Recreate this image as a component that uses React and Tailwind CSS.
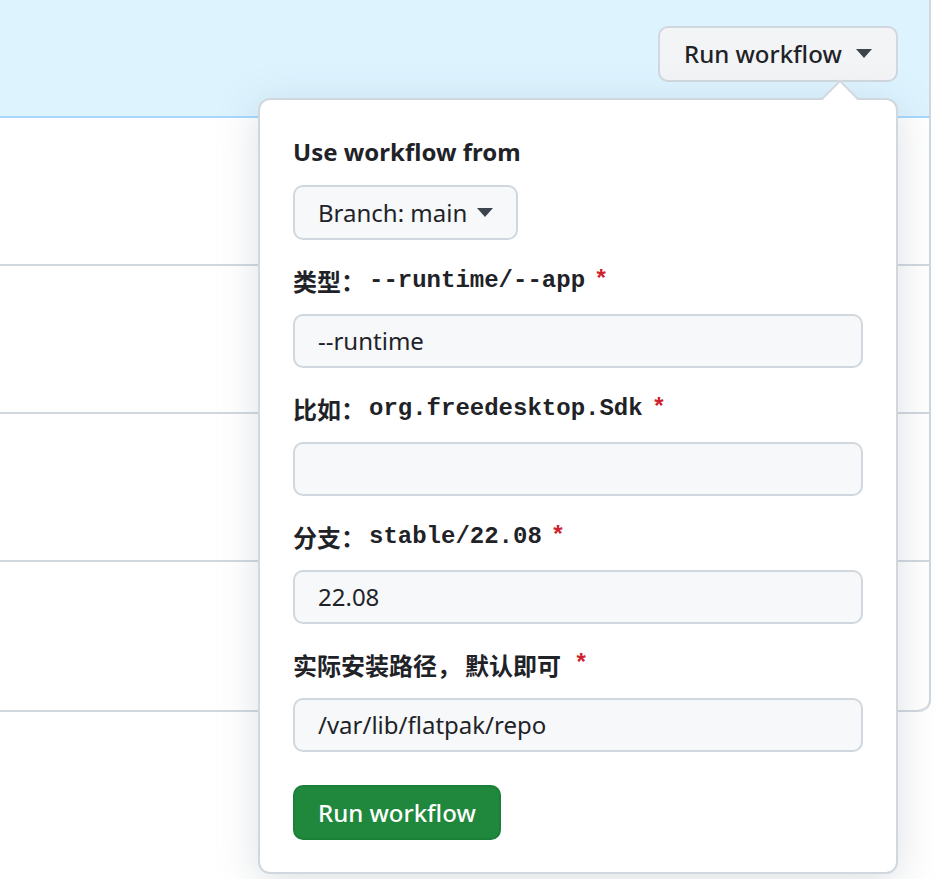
const fields = [
  { cjk: '类型：', code: '--runtime/--app', value: '--runtime' },
  { cjk: '比如：', code: 'org.freedesktop.Sdk', value: '' },
  { cjk: '分支：', code: 'stable/22.08', value: '22.08' },
  { cjk: '实际安装路径，', tail: '默认即可', code: '', value: '/var/lib/flatpak/repo' },
]

function Caret({ className }) {
  return (
    <svg viewBox="0 0 16 10" className={className} fill="currentColor">
      <path d="M0 0h16L8 9z" />
    </svg>
  )
}

function Field({ cjk, tail, code, value }) {
  return (
    <div className="mt-[24px]">
      <label className="flex h-[34px] items-center text-[24px] font-bold text-[#1f2328] font-['Liberation_Mono','Noto_Sans_CJK_SC',monospace]">
        <span className="font-['Noto_Sans_CJK_SC',sans-serif]">{cjk}</span>
        {tail && <span className="ml-[4px] font-['Noto_Sans_CJK_SC',sans-serif]">{tail}</span>}
        {code && <span className="ml-[4px]">{code}</span>}
        <span className={`text-[#cf222e] ${code ? 'ml-[9px]' : 'ml-[13px]'}`}>*</span>
      </label>
      <div className="mt-[16px] flex h-[54px] items-center rounded-[10px] border-2 border-[#d0d7de] bg-[#f6f8fa] px-[23px] text-[24px] text-[#1f2328]">
        {value}
      </div>
    </div>
  )
}

export default function App() {
  return (
    <div className="relative h-[879px] w-[935px] overflow-hidden bg-white font-['Noto_Sans',sans-serif]">
      <div className="mr-[4px] rounded-br-[12px] border-r-2 border-[#d0d7de]">
        <div className="h-[118px] border-b-2 border-[#a6d8ff] bg-[#ddf4ff]" />
        <div className="h-[148px] border-b-2 border-[#d0d7de]" />
        <div className="h-[148px] border-b-2 border-[#d0d7de]" />
        <div className="h-[148px] border-b-2 border-[#d0d7de]" />
        <div className="h-[150px] rounded-br-[12px] border-b-2 border-[#d0d7de]" />
      </div>

      <button className="absolute left-[658px] top-[26px] flex h-[56px] w-[240px] items-center rounded-[10px] border-2 border-[#d0d7de] bg-[#f3f4f6] pl-[24px] text-[24px] font-medium text-[#1f2328]">
        Run workflow
        <Caret className="ml-[14px] h-[10px] w-[16px] text-[#3d444d]" />
      </button>

      <div className="absolute left-[258px] top-[98px] w-[640px] rounded-[12px] border-2 border-[#d0d7de] bg-white px-[33px] pb-[32px] pt-[35px] shadow-[0_8px_40px_rgba(140,149,159,0.3)]">
        <div className="absolute -top-[15px] right-[43px] h-[26px] w-[26px] rotate-45 border-l-2 border-t-2 border-[#d0d7de] bg-white" />
        <div className="relative">
          <div className="flex h-[34px] items-center text-[24px] font-bold text-[#1f2328]">
            Use workflow from
          </div>
          <button className="mt-[16px] flex h-[55px] items-center rounded-[10px] border-2 border-[#d0d7de] bg-[#f6f8fa] px-[23px] text-[24px] text-[#1f2328]">
            Branch: main
            <Caret className="ml-[10px] h-[10px] w-[16px] text-[#3d444d]" />
          </button>
          {fields.map((f) => (
            <Field key={f.value + f.cjk} {...f} />
          ))}
          <button className="mt-[33px] flex h-[55px] items-center rounded-[10px] border-2 border-[#1a7f37] bg-[#1f883d] px-[23px] text-[24px] font-medium text-white">
            Run workflow
          </button>
        </div>
      </div>
    </div>
  )
}
